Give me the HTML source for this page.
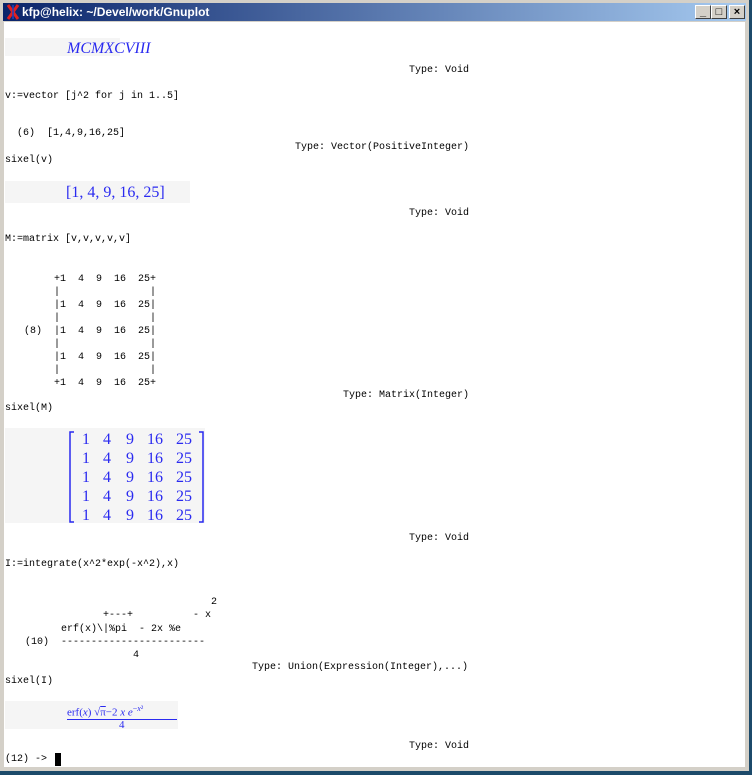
<!DOCTYPE html>
<html><head><style>
body{margin:0;width:752px;height:775px;background:#1c4a6a;position:relative;overflow:hidden}
.win{position:absolute;left:0;top:0;width:749px;height:771px;background:#d4d0c8}
.title{position:absolute;left:3px;top:3px;width:743px;height:18px;background:linear-gradient(90deg,#0a246a,#a6caf0);color:#fff;font:bold 12px "Liberation Sans",sans-serif;line-height:18px}
.title span{position:absolute;left:19px;top:0}
.btn{position:absolute;top:2px;width:16px;height:14px;background:#d4d0c8;border:1px solid;border-color:#fff #404040 #404040 #fff;box-sizing:border-box;color:#000;font:bold 11px "Liberation Sans",sans-serif;text-align:center;line-height:12px}
.content{position:absolute;left:4px;top:22px;width:741px;height:745px;background:#fff}
.t{position:absolute;font:10px/12px "Liberation Mono",monospace;white-space:pre;color:#000}
.box{position:absolute;background:#f5f5f5}
.m{position:absolute;font-family:"Liberation Serif",serif;color:#2a2af0;white-space:pre}
</style></head><body>
<div class="win">
<div class="title">
<svg style="position:absolute;left:3px;top:1px" width="14" height="16"><path d="M2 1L12 15M12 1L2 15" stroke="#e02020" stroke-width="3"/><path d="M7 1V15" stroke="#2040c0" stroke-width="1.5"/></svg>
<span>kfp@helix: ~/Devel/work/Gnuplot</span>
<div class="btn" style="left:692px">_</div><div class="btn" style="left:708px">□</div><div class="btn" style="left:726px">×</div>
</div>
<div class="content"></div>
</div>
<div class="box" style="left:5px;top:38px;width:115px;height:18px"></div>
<div class="m" style="left:67px;top:40px;font-size:16px;font-style:italic">MCMXCVIII</div>
<div class="t" style="left:409px;top:65px">Type: Void</div>
<div class="t" style="left:5px;top:91px">v:=vector [j^2 for j in 1..5]</div>
<div class="t" style="left:5px;top:128px">  (6)  [1,4,9,16,25]</div>
<div class="t" style="left:295px;top:142px">Type: Vector(PositiveInteger)</div>
<div class="t" style="left:5px;top:155px">sixel(v)</div>
<div class="box" style="left:5px;top:181px;width:185px;height:22px"></div>
<div class="m" style="left:66px;top:184px;font-size:16px">[1, 4, 9, 16, 25]</div>
<div class="t" style="left:409px;top:208px">Type: Void</div>
<div class="t" style="left:5px;top:234px">M:=matrix [v,v,v,v,v]</div>
<div class="t" style="left:6px;top:273px;line-height:13px">        +1  4  9  16  25+
        |               |
        |1  4  9  16  25|
        |               |
   (8)  |1  4  9  16  25|
        |               |
        |1  4  9  16  25|
        |               |
        +1  4  9  16  25+</div>
<div class="t" style="left:343px;top:390px">Type: Matrix(Integer)</div>
<div class="t" style="left:5px;top:403px">sixel(M)</div>
<div class="box" style="left:5px;top:428px;width:200px;height:95px"></div>
<svg style="position:absolute;left:68px;top:431px" width="140" height="92">
<path d="M6 1H2V91H6M131 1H135V91H131" stroke="#2a2af0" stroke-width="1.5" fill="none"/>
<g fill="#2a2af0" font-family="Liberation Serif,serif" font-size="16">
<g transform="translate(0,13)"><text x="14">1</text><text x="35">4</text><text x="58">9</text><text x="79">16</text><text x="108">25</text></g>
<g transform="translate(0,32)"><text x="14">1</text><text x="35">4</text><text x="58">9</text><text x="79">16</text><text x="108">25</text></g>
<g transform="translate(0,51)"><text x="14">1</text><text x="35">4</text><text x="58">9</text><text x="79">16</text><text x="108">25</text></g>
<g transform="translate(0,70)"><text x="14">1</text><text x="35">4</text><text x="58">9</text><text x="79">16</text><text x="108">25</text></g>
<g transform="translate(0,89)"><text x="14">1</text><text x="35">4</text><text x="58">9</text><text x="79">16</text><text x="108">25</text></g>
</g></svg>
<div class="t" style="left:409px;top:533px">Type: Void</div>
<div class="t" style="left:5px;top:559px">I:=integrate(x^2*exp(-x^2),x)</div>
<div class="t" style="left:1px;top:597px">                                   2</div>
<div class="t" style="left:1px;top:610px">                 +---+          - x</div>
<div class="t" style="left:1px;top:624px">          erf(x)\|%pi  - 2x %e</div>
<div class="t" style="left:1px;top:637px">    (10)  ------------------------</div>
<div class="t" style="left:1px;top:650px">                      4</div>
<div class="t" style="left:252px;top:662px">Type: Union(Expression(Integer),...)</div>
<div class="t" style="left:5px;top:676px">sixel(I)</div>
<div class="box" style="left:5px;top:701px;width:173px;height:28px"></div>
<div class="m" style="left:67px;top:704px;font-size:11px">erf(<i>x</i>) √<span style="text-decoration:overline">π</span>−2 <i>x</i> <i>e</i><sup style="font-size:8px">−<i>x</i>²</sup></div>
<div style="position:absolute;left:67px;top:719px;width:110px;height:1px;background:#2a2af0"></div>
<div class="m" style="left:119px;top:719px;font-size:11px">4</div>
<div class="t" style="left:409px;top:741px">Type: Void</div>
<div class="t" style="left:5px;top:754px">(12) -> </div>
<div style="position:absolute;left:55px;top:753px;width:6px;height:13px;background:#000"></div>
</body></html>
